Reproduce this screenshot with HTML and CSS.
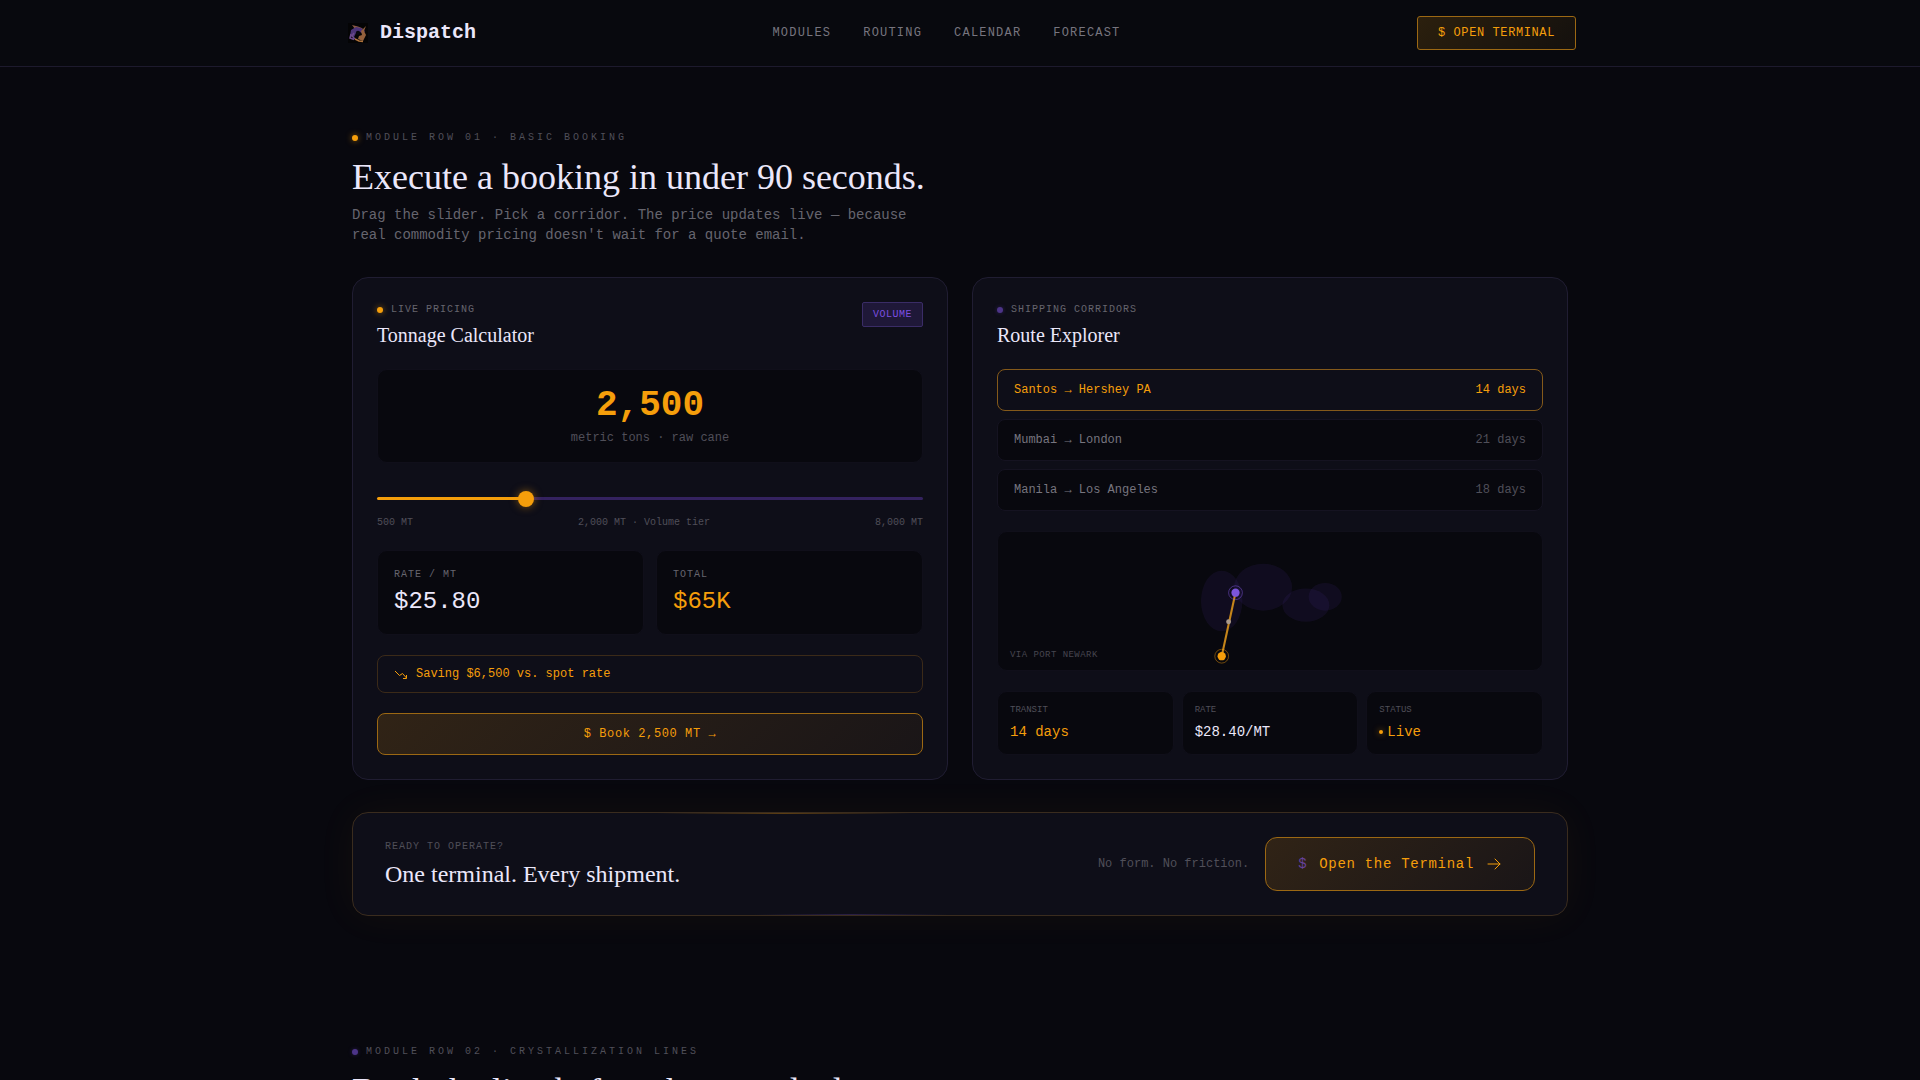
FILE: index.html
```html
<!DOCTYPE html>
<html lang="en">
<head>
    <meta charset="UTF-8">
    <meta name="viewport" content="width=device-width, initial-scale=1.0">
    <title>Dispatch</title>
    <link rel="stylesheet" href="styles.css">
</head>
<body>

    <header class="site-header">
        <div class="header-inner">
            <a href="#" class="brand">
                <svg class="brand-logo" viewBox="0 0 28 28" aria-hidden="true">
                    <rect x="4" y="4" width="20" height="20" fill="#040405"/>
                    <path d="M8 6l6 1.500 5 2-3 1.500-5-1z" fill="#8a5a45"/>
                    <path d="M7 11l5-3 5 1 4 3-2 3-3-2-4 1-2 4-4-1z" fill="#4c3478"/>
                    <path d="M7 15l-1 4 4 1.500M10 14l-2 3 3 3" stroke="#6d4a8c" stroke-width="1.500" fill="none"/>
                    <path d="M22 7l-2 5 2 4-3 6-5-2 1-3 3-1-1-4z" fill="#94603c"/>
                    <path d="M11 20l4 2 4 .500" stroke="#b0743c" stroke-width="1.500" fill="none"/>
                    <circle cx="14" cy="14" r="2.200" fill="#09080f"/>
                </svg>
                <span>Dispatch</span>
            </a>
            <nav class="main-nav">
                <a href="#modules">Modules</a>
                <a href="#routing">Routing</a>
                <a href="#calendar">Calendar</a>
                <a href="#forecast">Forecast</a>
            </nav>
            <button type="button" class="nav-btn">$ OPEN TERMINAL</button>
        </div>
    </header>

    <main>
        <!-- Module row 01 -->
        <section class="section" id="modules">
            <p class="eyebrow"><span class="dot"></span>Module Row 01 · Basic Booking</p>
            <h2 class="section-title">Execute a booking in under 90 seconds.</h2>
            <p class="section-text">Drag the slider. Pick a corridor. The price updates live — because real commodity pricing doesn't wait for a quote email.</p>

            <div class="cards">
                <div class="card">
                    <div class="card-head">
                        <div>
                            <p class="label"><span class="dot"></span>Live Pricing</p>
                            <h3 class="card-title">Tonnage Calculator</h3>
                        </div>
                        <span class="tag">VOLUME</span>
                    </div>

                    <div class="panel tonnage">
                        <div class="tonnage-value" id="tonnageValue">2,500</div>
                        <label class="tonnage-unit" for="tonnage">metric tons · raw cane</label>
                    </div>

                    <div class="slider">
                        <input type="range" id="tonnage" class="slider-input" min="500" max="8000" step="100" value="2500">
                        <div class="slider-labels">
                            <span>500 MT</span>
                            <span>2,000 MT · Volume tier</span>
                            <span>8,000 MT</span>
                        </div>
                    </div>

                    <div class="price-grid">
                        <div class="panel price">
                            <p class="label">Rate / MT</p>
                            <p class="price-value">$25.80</p>
                        </div>
                        <div class="panel price">
                            <p class="label">Total</p>
                            <p class="price-value amber" id="totalValue">$65K</p>
                        </div>
                    </div>

                    <div class="saving">
                        <svg width="14" height="14" viewBox="0 0 14 14" fill="none" stroke="currentColor" aria-hidden="true">
                            <path d="M1 4l4.500 4.500 3-2L12.500 11M9 11.500h3.500V8"/>
                        </svg>
                        <span>Saving $6,500 vs. spot rate</span>
                    </div>

                    <button type="button" class="book-btn">$ Book <span id="bookValue">2,500</span> MT →</button>
                </div>

                <div class="card">
                    <div class="card-head">
                        <div>
                            <p class="label"><span class="dot purple"></span>Shipping Corridors</p>
                            <h3 class="card-title">Route Explorer</h3>
                        </div>
                    </div>

                    <div class="routes">
                        <button type="button" class="route active"><span>Santos → Hershey PA</span><span class="days">14 days</span></button>
                        <button type="button" class="route"><span>Mumbai → London</span><span class="days">21 days</span></button>
                        <button type="button" class="route"><span>Manila → Los Angeles</span><span class="days">18 days</span></button>
                    </div>

                    <div class="panel map">
                        <svg class="map-svg" viewBox="0 0 200 100" aria-hidden="true">
                            <g fill="#4c2f91" fill-opacity="0.130">
                                <ellipse cx="65" cy="50" rx="15" ry="22"/>
                                <ellipse cx="95" cy="40" rx="21" ry="17"/>
                                <ellipse cx="126" cy="53" rx="17" ry="12"/>
                                <ellipse cx="140" cy="47" rx="12" ry="10"/>
                            </g>
                            <path d="M65 90L75 44" stroke="#c5851a" stroke-width="1.500"/>
                            <circle cx="65" cy="90" r="5" fill="none" stroke="#f59e0b" stroke-opacity="0.450" stroke-width="0.700"/>
                            <circle cx="65" cy="90" r="3" fill="#f59e0b"/>
                            <circle cx="75" cy="44" r="5" fill="none" stroke="#8b5cf6" stroke-opacity="0.450" stroke-width="0.700"/>
                            <circle cx="75" cy="44" r="3" fill="#7c55dc"/>
                            <circle cx="70" cy="65" r="1.800" fill="#a99a8c"/>
                        </svg>
                        <span class="map-label">VIA PORT NEWARK</span>
                    </div>

                    <div class="stats">
                        <div class="panel stat">
                            <p class="stat-label">TRANSIT</p>
                            <p class="stat-value amber">14 days</p>
                        </div>
                        <div class="panel stat">
                            <p class="stat-label">RATE</p>
                            <p class="stat-value">$28.40/MT</p>
                        </div>
                        <div class="panel stat">
                            <p class="stat-label">STATUS</p>
                            <p class="stat-value amber"><span class="live-dot"></span>Live</p>
                        </div>
                    </div>
                </div>
            </div>

            <div class="cta">
                <div>
                    <p class="label dim">Ready to operate?</p>
                    <h3 class="cta-title">One terminal. Every shipment.</h3>
                </div>
                <div class="cta-actions">
                    <span class="cta-note">No form. No friction.</span>
                    <button type="button" class="cta-btn">
                        <span class="prompt">$</span>
                        <span>Open the Terminal</span>
                        <svg width="16" height="16" viewBox="0 0 16 16" fill="none" stroke="currentColor" stroke-linecap="round" stroke-linejoin="round" aria-hidden="true">
                            <path d="M2 8h12M9 3l5 5-5 5"/>
                        </svg>
                    </button>
                </div>
            </div>
        </section>

        <!-- Module row 02 -->
        <section class="section">
            <p class="eyebrow"><span class="dot purple"></span>Module Row 02 · Crystallization Lines</p>
            <h2 class="section-title">Book the line before the crowd adapts.</h2>
        </section>
    </main>

    <script>
        let slider = document.getElementById("tonnage");

        function updateTonnage() {
            let tons = Number(slider.value);
            let percent = (tons - slider.min) / (slider.max - slider.min) * 100;
            slider.style.setProperty("--fill", percent + "%");
            document.getElementById("tonnageValue").textContent = tons.toLocaleString("en-US");
            document.getElementById("bookValue").textContent = tons.toLocaleString("en-US");
            document.getElementById("totalValue").textContent = "$" + Math.round(tons * 25.8 / 1000) + "K";
        }

        slider.addEventListener("input", updateTonnage);
        updateTonnage();
    </script>

</body>
</html>
```
FILE: styles.css
```css
/* General Styles */
:root {
    --bg: #08080e;
    --card: #0e0e18;
    --line: #201d32;
    --text: #ebe7fa;
    --muted: #66656e;
    --dim: #504f59;
    --amber: #f59e0b;
    --mono: "Liberation Mono", monospace;
    --serif: "Liberation Serif", serif;
}

* {
    box-sizing: border-box;
}

body {
    margin: 0;
    background: var(--bg);
    color: var(--text);
    font-family: var(--mono);
    font-size: 14px;
    line-height: 20px;
    overflow-x: hidden;
}

h2, h3, p {
    margin: 0;
    font-weight: 400;
}

a {
    color: inherit;
    text-decoration: none;
}

button {
    font-family: inherit;
    cursor: pointer;
}

.amber {
    color: var(--amber);
}

/* Header */
.site-header {
    position: sticky;
    top: 0;
    z-index: 10;
    background: #08090e;
    box-shadow: 0 1px 0 #1d1a2d;
}

.header-inner {
    display: flex;
    align-items: center;
    justify-content: space-between;
    max-width: 1280px;
    margin: 0 auto;
    padding: 16px 24px;
}

.brand {
    display: flex;
    align-items: center;
    gap: 8px;
    font-size: 20px;
    font-weight: 700;
    line-height: 28px;
}

.brand-logo {
    width: 28px;
    height: 28px;
}

.main-nav {
    display: flex;
    gap: 32px;
    color: #77757f;
    font-size: 12px;
    line-height: 16px;
    letter-spacing: 0.1em;
    text-transform: uppercase;
}

.nav-btn,
.book-btn,
.cta-btn {
    border: 1px solid #9c6813;
    background: linear-gradient(135deg, rgba(245, 158, 11, 0.15), rgba(245, 158, 11, 0.05));
    color: var(--amber);
    font-size: 12px;
    line-height: 16px;
    letter-spacing: 0.05em;
}

.nav-btn {
    padding: 8px 20px;
    border-radius: 3px;
}

/* Sections */
.section {
    max-width: 1280px;
    margin: 0 auto;
    padding: 64px 32px;
}

.eyebrow,
.label {
    color: var(--muted);
    font-size: 10px;
    line-height: 15px;
    letter-spacing: 0.1em;
    text-transform: uppercase;
}

.eyebrow {
    margin-bottom: 12px;
    color: var(--dim);
    letter-spacing: 0.3em;
}

.label.dim {
    color: var(--dim);
}

.dot {
    display: inline-block;
    width: 6px;
    height: 6px;
    margin-right: 8px;
    border-radius: 50%;
    background: var(--amber);
    box-shadow: 0 0 6px rgba(245, 158, 11, 0.6);
    vertical-align: -1px;
}

.dot.purple {
    background: #4c3488;
    box-shadow: 0 0 4px rgba(91, 60, 170, 0.4);
}

.section-title {
    margin-bottom: 8px;
    font-family: var(--serif);
    font-size: 36px;
    line-height: 40px;
}

.section-text {
    max-width: 576px;
    color: var(--muted);
}

/* Cards */
.cards {
    display: grid;
    grid-template-columns: 1fr 1fr;
    gap: 24px;
    margin-top: 32px;
}

.card {
    padding: 24px;
    border: 1px solid var(--line);
    border-radius: 16px;
    background: var(--card);
}

.card-head {
    display: flex;
    align-items: flex-start;
    justify-content: space-between;
    margin-bottom: 20px;
}

.card-title {
    margin-top: 4px;
    font-family: var(--serif);
    font-size: 20px;
    line-height: 28px;
}

.tag {
    padding: 4px 10px;
    border: 1px solid #3a2c66;
    border-radius: 2px;
    background: #1f1838;
    color: #7c4fe0;
    font-size: 10px;
    line-height: 15px;
    letter-spacing: 0.05em;
}

.panel {
    border: 1px solid #100f1a;
    border-radius: 10px;
    background: var(--bg);
}

/* Tonnage Calculator */
.tonnage {
    padding: 16px;
    text-align: center;
}

.tonnage-value {
    color: var(--amber);
    font-size: 36px;
    font-weight: 700;
    line-height: 40px;
}

.tonnage-unit {
    display: block;
    margin-top: 4px;
    color: var(--dim);
    font-size: 12px;
    line-height: 16px;
}

.slider {
    margin: 20px 0;
    padding-top: 8px;
}

.slider-input {
    display: block;
    width: 100%;
    height: 14px;
    margin: 0 0 10px;
    appearance: none;
    background: none;
    cursor: pointer;
}

.slider-input::-webkit-slider-runnable-track {
    height: 3px;
    border-radius: 2px;
    background: linear-gradient(90deg, var(--amber) var(--fill, 27%), #34225f var(--fill, 27%));
}

.slider-input::-webkit-slider-thumb {
    appearance: none;
    width: 16px;
    height: 16px;
    margin-top: -6px;
    border-radius: 50%;
    background: var(--amber);
    box-shadow: 0 0 8px rgba(245, 158, 11, 0.5);
}

.slider-labels {
    display: flex;
    justify-content: space-between;
    color: var(--dim);
    font-size: 10px;
    line-height: 15px;
}

.price-grid {
    display: grid;
    grid-template-columns: 1fr 1fr;
    gap: 12px;
}

.price {
    padding: 16px;
}

.price-value {
    margin-top: 4px;
    font-size: 24px;
    line-height: 32px;
}

.saving {
    display: flex;
    align-items: center;
    gap: 8px;
    margin: 20px 0;
    padding: 10px 16px;
    border: 1px solid #3b2a18;
    border-radius: 8px;
    color: var(--amber);
    font-size: 12px;
    line-height: 16px;
}

.book-btn {
    width: 100%;
    padding: 12px;
    border-radius: 8px;
}

/* Route Explorer */
.routes {
    display: grid;
    gap: 8px;
}

.route {
    display: flex;
    justify-content: space-between;
    padding: 12px 16px;
    border: 1px solid #151321;
    border-radius: 8px;
    background: var(--bg);
    color: #77757f;
    font-size: 12px;
    line-height: 16px;
}

.route .days {
    color: var(--dim);
}

.route.active {
    border-color: #84591a;
    background: none;
}

.route.active,
.route.active .days {
    color: var(--amber);
}

.map {
    position: relative;
    height: 140px;
    margin: 20px 0;
}

.map-svg {
    display: block;
    width: 100%;
    height: 100%;
}

.map-label {
    position: absolute;
    left: 12px;
    bottom: 8px;
    color: #46454f;
    font-size: 9px;
    line-height: 14px;
    letter-spacing: 0.05em;
}

.stats {
    display: grid;
    grid-template-columns: repeat(3, 1fr);
    gap: 8px;
}

.stat {
    padding: 12px;
}

.stat-label {
    margin-bottom: 6px;
    color: var(--dim);
    font-size: 9px;
    line-height: 12px;
}

.stat-value {
    display: flex;
    align-items: center;
    gap: 4px;
}

.live-dot {
    width: 4px;
    height: 4px;
    border-radius: 50%;
    background: var(--amber);
    box-shadow: 0 0 6px rgba(245, 158, 11, 0.7);
}

/* Call to action */
.cta {
    position: relative;
    display: flex;
    align-items: center;
    justify-content: space-between;
    margin-top: 32px;
    padding: 24px 32px;
    border: 1px solid #3a2c1e;
    border-radius: 16px;
    background: var(--card);
    box-shadow: 0 0 40px rgba(245, 158, 11, 0.05);
}

/* light streaks along the top and bottom edges */
.cta::before,
.cta::after {
    content: "";
    position: absolute;
    height: 1px;
}

.cta::before {
    top: 0;
    left: 25%;
    width: 21%;
    background: linear-gradient(90deg, transparent, #5c3e13, transparent);
}

.cta::after {
    bottom: 0;
    left: 33%;
    width: 16%;
    background: linear-gradient(90deg, transparent, #2a1f45, transparent);
}

.cta-title {
    margin-top: 4px;
    font-family: var(--serif);
    font-size: 24px;
    line-height: 32px;
}

.cta-actions {
    display: flex;
    align-items: center;
    gap: 16px;
}

.cta-note {
    color: var(--dim);
    font-size: 12px;
    line-height: 16px;
}

.cta-btn {
    display: flex;
    align-items: center;
    gap: 12px;
    padding: 16px 32px;
    border-radius: 12px;
    font-size: 14px;
    line-height: 20px;
}

.prompt {
    color: #67429c;
}

/* Responsive Design */
@media (max-width: 900px) {
    .main-nav {
        display: none;
    }

    .cards {
        grid-template-columns: 1fr;
    }

    .cta,
    .cta-actions {
        flex-wrap: wrap;
    }
}
```
